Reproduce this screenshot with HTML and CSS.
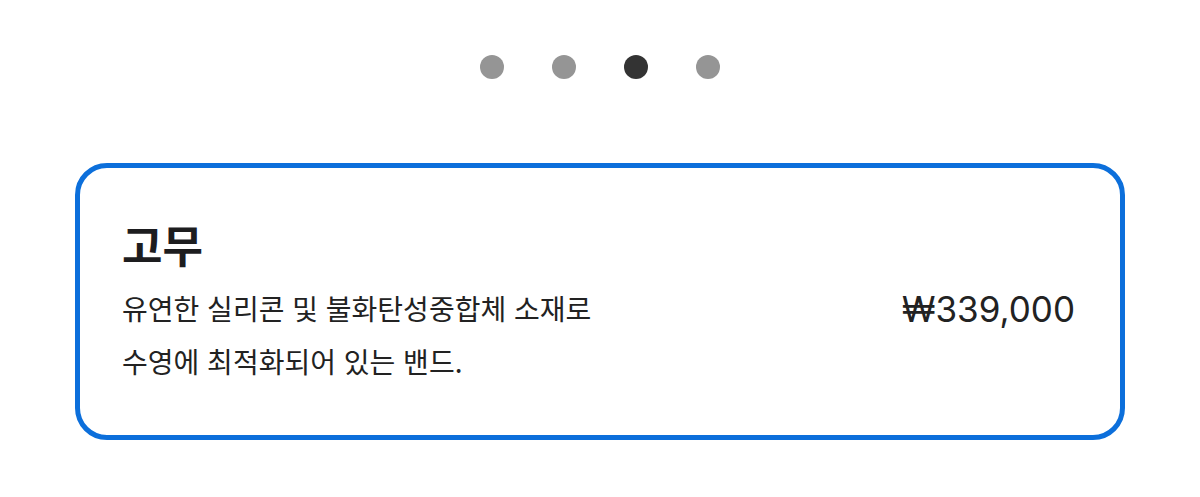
FILE: index.html
```html
<!DOCTYPE html>
<html lang="ko">
<head>
    <meta charset="UTF-8">
    <meta name="viewport" content="width=device-width, initial-scale=1.0">
    <title>밴드 선택</title>
    <link rel="stylesheet" href="styles.css">
</head>
<body>
    <div class="pager">
        <span class="dot"></span>
        <span class="dot"></span>
        <span class="dot active"></span>
        <span class="dot"></span>
    </div>

    <div class="option-card">
        <h2 class="option-title">고무</h2>
        <div class="option-row">
            <p class="option-desc">유연한 실리콘 및 불화탄성중합체 소재로<br>수영에 최적화되어 있는 밴드.</p>
            <span class="option-price">₩339,000</span>
        </div>
    </div>
</body>
</html>
```

FILE: styles.css
```css
body{
  margin:0;
  background:#fff;
  font-family:"Noto Sans CJK KR", "Noto Sans", sans-serif;
  color:#1d1d1f;
}

/* page dots above the card */
.pager{
  display:flex;
  justify-content:center;
  gap:48px;
  padding-top:55px;
}
.dot{
  width:24px;
  height:24px;
  border-radius:50%;
  background:#959595;
}
.dot.active{
  background:#333;
}

.option-card{
  margin:84px 75px 0;
  border:5px solid #0c6fdb;
  border-radius:32px;
  padding:50px 45px 47px 42px;
}
.option-title{
  margin:0 0 12px;
  font-size:44px;
  line-height:52px;
  font-weight:700;
}
.option-row{
  display:flex;
  justify-content:space-between;
  align-items:flex-start;
}
.option-desc{
  margin:0;
  font-size:28px;
  line-height:53px;
  color:#222;
}
.option-price{
  padding-top:1px;
  font-family:Inter, "Noto Sans", sans-serif;
  font-size:35px;
  line-height:53px;
  color:#222;
}
```
